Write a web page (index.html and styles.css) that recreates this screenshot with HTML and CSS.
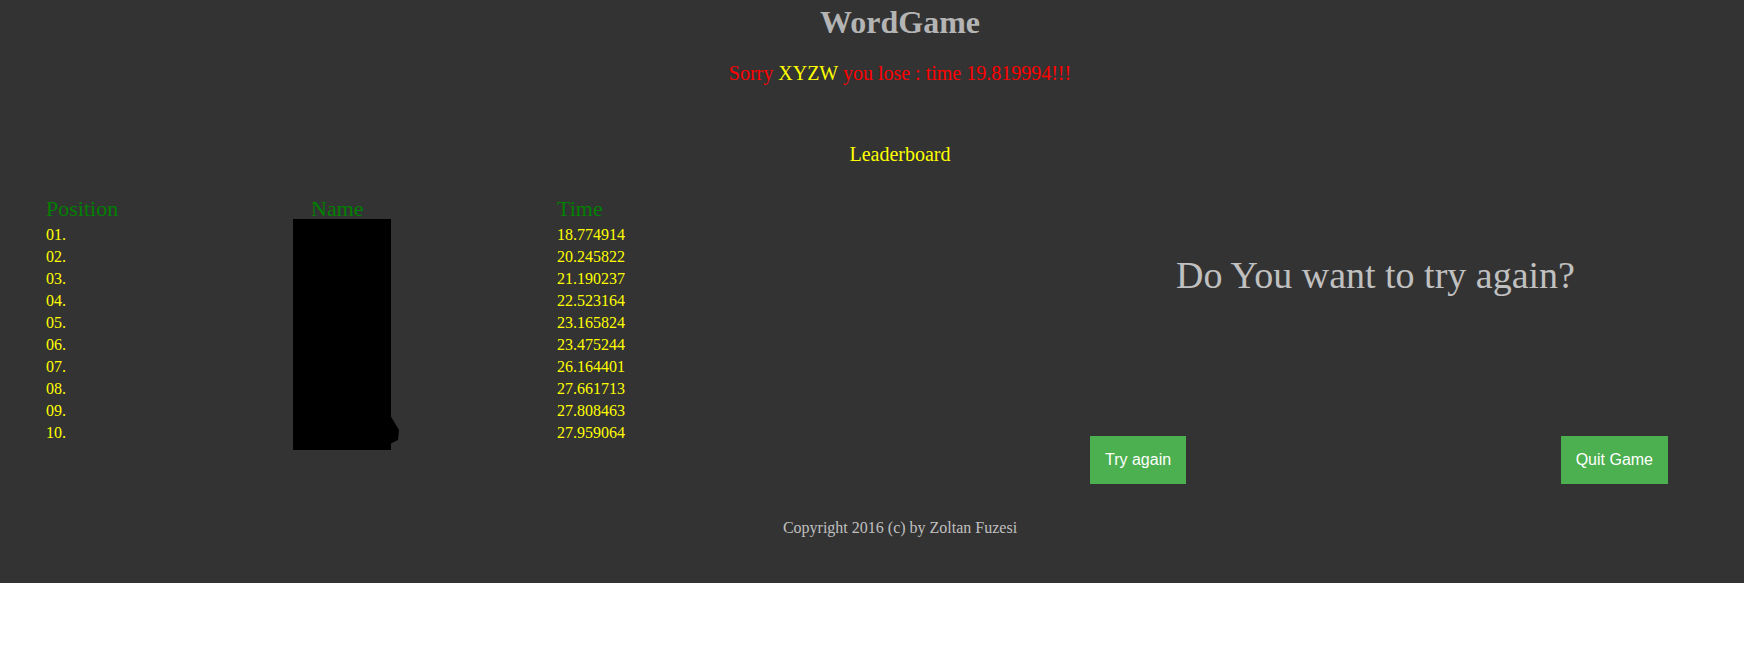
FILE: index.html
```html
<!DOCTYPE html>
<html lang="en">
<head>
<meta charset="utf-8">
<title>WordGame</title>
<link rel="stylesheet" href="styles.css">
</head>
<body>
<div class="page">
  <header class="top">
    <h1 class="title">WordGame</h1>
    <p class="result">Sorry <span class="player">XYZW</span> you lose : time 19.819994!!!</p>
    <p class="board-title">Leaderboard</p>
  </header>
  <main class="main">
    <section class="board">
      <div class="grid">
        <div class="th">Position</div><div class="th">Name</div><div class="th">Time</div>
        <div class="td">01.</div><div class="td"></div><div class="td">18.774914</div>
        <div class="td">02.</div><div class="td"></div><div class="td">20.245822</div>
        <div class="td">03.</div><div class="td"></div><div class="td">21.190237</div>
        <div class="td">04.</div><div class="td"></div><div class="td">22.523164</div>
        <div class="td">05.</div><div class="td"></div><div class="td">23.165824</div>
        <div class="td">06.</div><div class="td"></div><div class="td">23.475244</div>
        <div class="td">07.</div><div class="td"></div><div class="td">26.164401</div>
        <div class="td">08.</div><div class="td"></div><div class="td">27.661713</div>
        <div class="td">09.</div><div class="td"></div><div class="td">27.808463</div>
        <div class="td">10.</div><div class="td"></div><div class="td">27.959064</div>
      </div>
      <svg class="redact" width="108" height="232" viewBox="0 0 108 232">
        <rect x="0" y="0" width="98" height="231" fill="#000"/>
        <polygon points="97,196 106,211 105,221 97,225" fill="#000"/>
      </svg>
    </section>
    <section class="retry">
      <h2 class="question">Do You want to try again?</h2>
      <div class="actions">
        <button class="btn">Try again</button>
        <button class="btn">Quit Game</button>
      </div>
    </section>
  </main>
  <footer class="footer">Copyright 2016 (c) by Zoltan Fuzesi</footer>
</div>
</body>
</html>
```

FILE: styles.css
```css
html, body {
  margin: 0;
  padding: 0;
  background: #ffffff;
}

.page {
  background: #333333;
  font-family: "Liberation Serif", "Times New Roman", serif;
  padding: 2px 0 45px 0;
}

.top {
  padding-left: 56px;
  text-align: center;
}

.title {
  margin: 0;
  font-size: 32px;
  line-height: 40px;
  font-weight: bold;
  color: #b4b4b4;
}

.result {
  margin: 19px 0 0 0;
  font-size: 20px;
  line-height: 24px;
  color: #ff0000;
}

.player {
  color: #ffff00;
}

.board-title {
  margin: 57px 0 0 0;
  font-size: 20px;
  line-height: 24px;
  color: #ffff00;
}

.main {
  margin-top: 29px;
  display: flex;
}

.board {
  position: relative;
  width: 1007px;
  flex: none;
}

.grid {
  display: grid;
  grid-template-columns: 265px 246px 1fr;
  padding-left: 46px;
}

.th {
  font-size: 22px;
  line-height: 27px;
  padding-bottom: 2px;
  color: #008000;
}

.td {
  font-size: 16px;
  line-height: 22px;
  color: #ffff00;
}

.redact {
  position: absolute;
  left: 293px;
  top: 24px;
}

.retry {
  flex: 1;
  display: flex;
  flex-direction: column;
}

.question {
  margin: 58px 0 0 0;
  text-align: center;
  font-size: 38px;
  line-height: 44px;
  font-weight: normal;
  color: #c0c0c0;
}

.actions {
  margin-top: 139px;
  display: flex;
  justify-content: space-between;
  padding: 0 76px 0 83px;
}

.btn {
  background: #4caf50;
  color: #ffffff;
  border: none;
  border-radius: 0;
  font-family: "Liberation Sans", Arial, sans-serif;
  font-size: 16px;
  line-height: 18px;
  padding: 15px 15px;
  margin: 0;
}

.footer {
  margin-top: 34px;
  padding-left: 56px;
  text-align: center;
  font-size: 16px;
  line-height: 20px;
  color: #c0c0c0;
}
```
